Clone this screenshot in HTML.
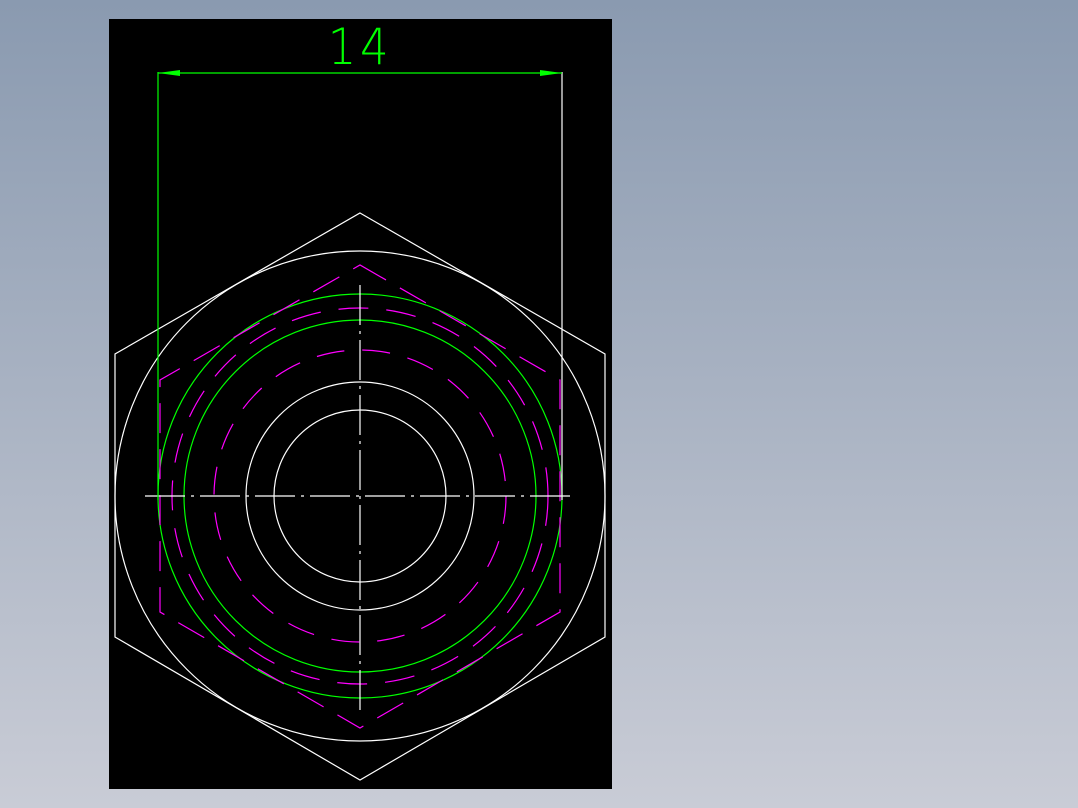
<!DOCTYPE html><html><head><style>
html,body{margin:0;padding:0}
body{width:1078px;height:808px;background:linear-gradient(#8a9ab0,#c9ccd6);position:relative;overflow:hidden}
svg{position:absolute;left:0;top:0}
</style></head><body>
<svg width="1078" height="808" viewBox="0 0 1078 808">
<rect x="109" y="19" width="503" height="770" fill="#000"/>
<g fill="none" stroke-width="1.2">
<polygon points="360,213 605,354 605,637 360,780 115,637 115,354" stroke="#fff"/>
<circle cx="360" cy="496" r="245" stroke="#fff"/>
<circle cx="360" cy="496" r="202" stroke="#0f0"/>
<circle cx="360" cy="496" r="176" stroke="#0f0"/>
<circle cx="360" cy="496" r="114" stroke="#fff"/>
<circle cx="360" cy="496" r="86" stroke="#fff"/>
<polygon points="360,265 560,380 560,612 360,728 160,612 160,380" stroke="#f0f" stroke-dasharray="30,16"/>
<circle cx="360" cy="496" r="188" stroke="#f0f" stroke-dasharray="30,18"/>
<circle cx="360" cy="496" r="146" stroke="#f0f" stroke-dasharray="28,18"/>
<line x1="145" y1="496" x2="575" y2="496" stroke="#fff" stroke-dasharray="40,6,3,6"/>
<line x1="360" y1="285" x2="360" y2="710" stroke="#fff" stroke-dasharray="40,6,3,6"/>
<line x1="158" y1="72" x2="158" y2="500" stroke="#0f0"/>
<line x1="562" y1="72" x2="562" y2="500" stroke="#fff"/>
<line x1="158" y1="73" x2="562" y2="73" stroke="#0f0"/>
</g>
<polygon points="158,73 180,70 180,76" fill="#0f0"/>
<polygon points="562,73 540,70 540,76" fill="#0f0"/>
<text x="360" y="64" text-anchor="middle" font-family="DejaVu Sans, sans-serif" font-size="50" font-weight="200" letter-spacing="4" fill="#0f0" transform="translate(360 0) scale(0.9 1) translate(-360 0)">14</text>
</svg>
</body></html>
